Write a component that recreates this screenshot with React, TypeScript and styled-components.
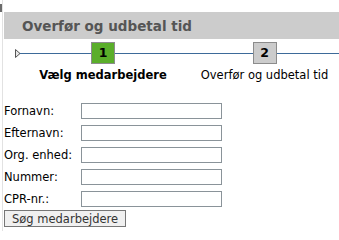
import React from 'react';
import styled, { createGlobalStyle } from 'styled-components';

const GlobalStyle = createGlobalStyle`
  body {
    margin: 0;
    background: #ffffff;
    font-family: Verdana, 'DejaVu Sans', sans-serif;
    font-size: 11.5px;
    color: #000000;
  }
`;

const fields = ['Fornavn:', 'Efternavn:', 'Org. enhed:', 'Nummer:', 'CPR-nr.:'];

const steps = [
  { num: '1', label: 'Vælg medarbejdere', active: true },
  { num: '2', label: 'Overfør og udbetal tid', active: false },
];

function App() {
  return (
    <>
      <GlobalStyle />
      <Page>
        <Rail>
          <RailMark />
        </Rail>
        <Content>
          <TitleBar>Overfør og udbetal tid</TitleBar>
          <StepTrack>
            <TrackStart width="6" height="9" viewBox="0 0 6 9">
              <path d="M0.5 0.5 L5 4.5 L0.5 8.5 Z" fill="#e8e8e8" stroke="#555" />
            </TrackStart>
            {steps.map((step) => (
              <Step key={step.num}>
                <StepBox active={step.active}>{step.num}</StepBox>
                <StepLabel active={step.active}>{step.label}</StepLabel>
              </Step>
            ))}
          </StepTrack>
          <Form>
            {fields.map((field) => (
              <React.Fragment key={field}>
                <Label>{field}</Label>
                <Input type="text" />
              </React.Fragment>
            ))}
          </Form>
          <Button>Søg medarbejdere</Button>
        </Content>
      </Page>
    </>
  );
}

const Page = styled.div`
  display: flex;
  min-height: 231px;
`;

const Rail = styled.div`
  width: 3px;
  border-right: 1px solid #e2e2e2;
`;

const RailMark = styled.div`
  margin-top: 4px;
  width: 2px;
  height: 8px;
  background: #6b6b6b;
`;

const Content = styled.div`
  flex: 1;
  padding: 12px 0 0 1px;
`;

const TitleBar = styled.div`
  height: 27px;
  line-height: 29px;
  padding-left: 18px;
  background: #cccccc;
  color: #555555;
  font-size: 13.5px;
  font-weight: bold;
`;

const StepTrack = styled.div`
  position: relative;
  display: grid;
  grid-template-columns: 162px 161px;
  margin-top: 3px;
  padding-left: 18px;

  &::before {
    content: '';
    position: absolute;
    left: 12px;
    right: 0;
    top: 11px;
    border-top: 1px solid #3d6a99;
  }
`;

const TrackStart = styled.svg`
  position: absolute;
  left: 11px;
  top: 7px;
`;

const Step = styled.div`
  position: relative;
  display: flex;
  flex-direction: column;
  align-items: center;
`;

const StepBox = styled.div<{ active: boolean }>`
  box-sizing: border-box;
  width: 24px;
  height: 22px;
  line-height: 20px;
  text-align: center;
  border: 1px solid #8c8c8c;
  background: ${(props) => (props.active ? '#5aae2a' : '#cccccc')};
  font-size: 12.5px;
  font-weight: bold;
`;

const StepLabel = styled.div<{ active: boolean }>`
  margin-top: 4px;
  font-weight: ${(props) => (props.active ? 'bold' : 'normal')};
  white-space: nowrap;
`;

const Form = styled.div`
  display: grid;
  grid-template-columns: 77px 141px;
  row-gap: 6px;
  align-items: center;
  margin-top: 21px;
`;

const Label = styled.label`
  white-space: nowrap;
`;

const Input = styled.input`
  box-sizing: border-box;
  width: 141px;
  height: 16px;
  margin: 0;
  padding: 0 2px;
  border: 1px solid #8a9399;
  font-family: inherit;
  font-size: 11px;
`;

const Button = styled.button`
  display: block;
  margin-top: 3px;
  height: 17px;
  padding: 0 7px;
  border: 1px solid #767676;
  background: #f0f0f0;
  color: #333333;
  font-family: inherit;
  font-size: 11.5px;
`;

export default App;
